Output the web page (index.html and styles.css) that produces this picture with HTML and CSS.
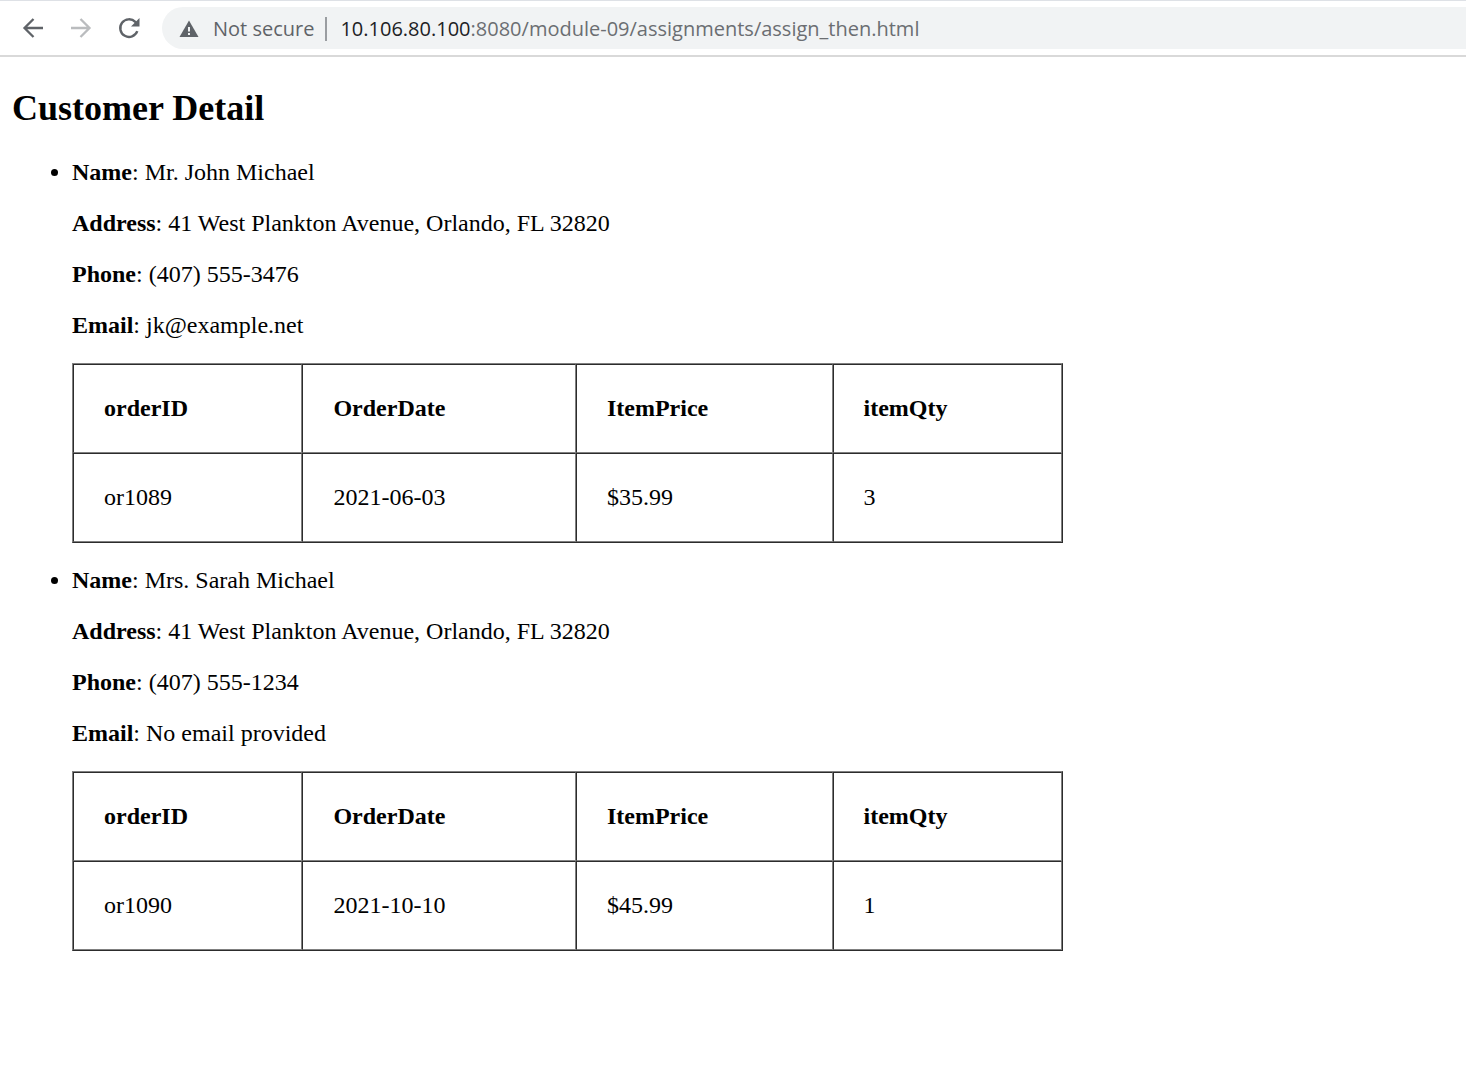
FILE: index.html
```html
<!DOCTYPE html>
<html lang="en">
<head>
<meta charset="utf-8">
<title>Customer Detail</title>
<link rel="stylesheet" href="styles.css">
</head>
<body>
<header class="toolbar">
  <nav class="nav-buttons">
    <button class="nav-button" type="button" aria-label="Back">
      <svg width="24" height="24" viewBox="0 0 24 24" fill="none" stroke="currentColor" stroke-width="2.300"><path d="M22 12H4M12.500 3L3.500 12L12.500 21"/></svg>
    </button>
    <button class="nav-button nav-button-off" type="button" aria-label="Forward" disabled>
      <svg width="24" height="24" viewBox="0 0 24 24" fill="none" stroke="currentColor" stroke-width="2.300"><path d="M2 12H20M11.500 3L20.500 12L11.500 21"/></svg>
    </button>
    <button class="nav-button" type="button" aria-label="Reload">
      <svg width="24" height="24" viewBox="0 0 24 24" fill="none" stroke="currentColor" stroke-width="2.400"><path d="M20.300 15.200A8.800 8.800 0 1 1 18.300 5.900L19.500 7.200"/><path d="M22.500 2V10.500H14Z" fill="currentColor" stroke="none"/></svg>
    </button>
  </nav>
  <div class="omnibox">
    <button class="security" type="button">
      <svg width="20" height="18" viewBox="0 0 20 18"><path d="M10 0.500L19.500 17H0.500Z" fill="#5f6368"/><path d="M9 7H11V11.500H9ZM9 13H11V15H9Z" fill="#f1f3f4"/></svg>
      <span>Not secure</span>
    </button>
    <span class="divider"></span>
    <span class="url"><span class="host">10.106.80.100</span>:8080/module-09/assignments/assign_then.html</span>
  </div>
</header>
<main class="page">
  <h2 class="title">Customer Detail</h2>
  <ul class="customers">
    <li class="customer">
      <p class="field"><b>Name</b>: Mr. John Michael</p>
      <p class="field"><b>Address</b>: 41 West Plankton Avenue, Orlando, FL 32820</p>
      <p class="field"><b>Phone</b>: (407) 555-3476</p>
      <p class="field"><b>Email</b>: jk@example.net</p>
      <table class="orders">
        <thead><tr><th scope="col">orderID</th><th scope="col">OrderDate</th><th scope="col">ItemPrice</th><th scope="col">itemQty</th></tr></thead>
        <tbody><tr><td>or1089</td><td>2021-06-03</td><td>$35.99</td><td>3</td></tr></tbody>
      </table>
    </li>
    <li class="customer">
      <p class="field"><b>Name</b>: Mrs. Sarah Michael</p>
      <p class="field"><b>Address</b>: 41 West Plankton Avenue, Orlando, FL 32820</p>
      <p class="field"><b>Phone</b>: (407) 555-1234</p>
      <p class="field"><b>Email</b>: No email provided</p>
      <table class="orders">
        <thead><tr><th scope="col">orderID</th><th scope="col">OrderDate</th><th scope="col">ItemPrice</th><th scope="col">itemQty</th></tr></thead>
        <tbody><tr><td>or1090</td><td>2021-10-10</td><td>$45.99</td><td>1</td></tr></tbody>
      </table>
    </li>
  </ul>
</main>
</body>
</html>
```
FILE: styles.css
```css
body {
  margin: 0;
  background: #fff;
  color: #000;
  font: 24px/27px "Liberation Serif", "Times New Roman", serif;
}

.toolbar {
  display: flex;
  align-items: center;
  gap: 21px;
  padding: 6px 0 6px 21px;
  border-top: 1px solid #dee1e6;
  border-bottom: 2px solid #d9d9d9;
  font: 20px/30px "Open Sans", "Segoe UI", sans-serif;
  color: #6b6e72;
}

.nav-buttons {
  display: flex;
  gap: 24px;
}

.nav-button,
.security {
  display: flex;
  align-items: center;
  padding: 0;
  border: 0;
  background: none;
  color: #5f6368;
  font: inherit;
}

.nav-button-off {
  color: #babcbe;
}

.omnibox {
  display: flex;
  flex: 1;
  align-items: center;
  box-sizing: border-box;
  height: 42px;
  padding: 2px 0 0 17px;
  border-radius: 21px 0 0 21px;
  background: #f1f3f4;
  white-space: nowrap;
}

.security {
  gap: 14px;
}

.divider {
  width: 2px;
  height: 24px;
  margin: 0 13px 0 11px;
  background: #9a9da1;
}

.host {
  color: #202124;
}

.page {
  padding: 30px 12px;
}

.title {
  margin: 0 0 30px;
  font-size: 36px;
  line-height: 42px;
}

.customers {
  margin: 0;
  padding-left: 60px;
}

.field {
  margin: 0 0 24px;
}

.orders {
  width: 100%;
  max-width: 991px;
  margin-bottom: 24px;
  border: 1px outset gray;
  border-spacing: 0;
}

.orders th,
.orders td {
  padding: 30px;
  border: 1px inset gray;
  text-align: left;
}
```
